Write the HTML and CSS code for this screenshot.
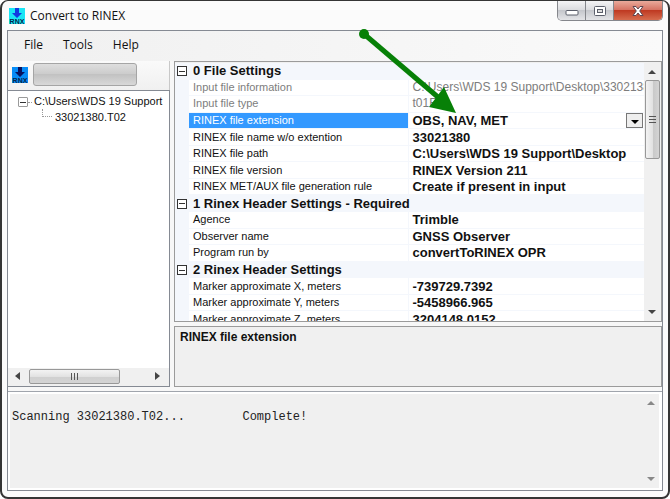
FILE: index.html
```html
<!DOCTYPE html>
<html lang="en">
<head>
    <meta charset="UTF-8">
    <meta name="viewport" content="width=device-width, initial-scale=1.0">
    <title>Convert to RINEX</title>
    <link rel="stylesheet" href="styles.css">
</head>
<body>

<div class="window">
    <header class="titlebar">
        <svg class="app-icon" viewBox="0 0 16 16">
            <rect width="16" height="16" fill="#19e5f5"/>
            <path d="M6 0h4v5h3l-5 5-5-5h3z" fill="#1238e0"/>
            <text x="8" y="16" class="icon-text">RNX</text>
        </svg>
        <h1>Convert to RINEX</h1>
        <div class="window-buttons">
            <button class="win-btn" aria-label="Minimize">
                <svg width="14" height="12" viewBox="0 0 14 12"><rect x="1" y="5.5" width="12" height="4.5" rx="1" fill="#fff" stroke="#5b5f6b"/></svg>
            </button>
            <button class="win-btn" aria-label="Maximize">
                <svg width="14" height="12" viewBox="0 0 14 12"><rect x="1.5" y="1.5" width="11" height="9" rx="1" fill="#fff" stroke="#5b5f6b"/><rect x="4.5" y="4.5" width="5" height="3" fill="#ddd" stroke="#5b5f6b"/></svg>
            </button>
            <button class="win-btn close" aria-label="Close">
                <svg width="14" height="12" viewBox="0 0 14 12"><path d="M2 1.5h3L7 4l2-2.500h3L8.700 6l3.300 4.500H9L7 8l-2 2.500H2L5.300 6z" fill="#fff" stroke="#5e4650"/></svg>
            </button>
        </div>
    </header>

    <div class="client">
        <nav class="menu">
            <button>File</button>
            <button>Tools</button>
            <button>Help</button>
        </nav>

        <main class="main">
            <section class="files">
                <div class="toolbar">
                    <button class="convert" aria-label="Convert">
                        <svg class="app-icon" viewBox="0 0 16 16">
                            <rect width="16" height="16" fill="#078cf7"/>
                            <path d="M6 0h4v5h3l-5 5-5-5h3z" fill="#07135f"/>
                            <text x="8" y="16" class="icon-text">RNX</text>
                        </svg>
                    </button>
                    <div class="progress" role="progressbar" aria-label="Progress"></div>
                </div>
                <div class="tree">
                    <ul>
                        <li>
                            <button class="toggle light" aria-label="Collapse folder"></button><span class="branch"></span>C:\Users\WDS 19 Support
                            <ul>
                                <li><span class="leaf"></span>33021380.T02</li>
                            </ul>
                        </li>
                    </ul>
                    <div class="scroll-x">
                        <svg width="8" height="8" viewBox="0 0 8 8"><path d="M6 0v8L1 4z" fill="#444"/></svg>
                        <div class="thumb"><i></i><i></i><i></i></div>
                        <svg width="8" height="8" viewBox="0 0 8 8"><path d="M2 0v8l5-4z" fill="#444"/></svg>
                    </div>
                </div>
            </section>

            <section class="props">
                <div class="grid">
                    <div class="rows">
                        <table>
                            <colgroup>
                                <col class="col-toggle">
                                <col>
                                <col class="col-value">
                            </colgroup>
                            <tr class="group"><td><button class="toggle" aria-label="Collapse"></button></td><th colspan="2">0 File Settings</th></tr>
                            <tr class="disabled"><td></td><td>Input file information</td><td>C:\Users\WDS 19 Support\Desktop\33021380</td></tr>
                            <tr class="disabled"><td></td><td>Input file type</td><td>t01F</td></tr>
                            <tr class="selected">
                                <td></td>
                                <td><label for="extension">RINEX file extension</label></td>
                                <td>
                                    <div class="dropdown">
                                        <select id="extension"><option>OBS, NAV, MET</option></select>
                                        <span class="arrow"></span>
                                    </div>
                                </td>
                            </tr>
                            <tr><td></td><td>RINEX file name w/o extention</td><td>33021380</td></tr>
                            <tr><td></td><td>RINEX file path</td><td>C:\Users\WDS 19 Support\Desktop</td></tr>
                            <tr><td></td><td>RINEX file version</td><td>RINEX Version 211</td></tr>
                            <tr><td></td><td>RINEX MET/AUX file generation rule</td><td>Create if present in input</td></tr>
                            <tr class="group"><td><button class="toggle" aria-label="Collapse"></button></td><th colspan="2">1 Rinex Header Settings - Required</th></tr>
                            <tr><td></td><td>Agence</td><td>Trimble</td></tr>
                            <tr><td></td><td>Observer name</td><td>GNSS Observer</td></tr>
                            <tr><td></td><td>Program run by</td><td>convertToRINEX OPR</td></tr>
                            <tr class="group"><td><button class="toggle" aria-label="Collapse"></button></td><th colspan="2">2 Rinex Header Settings</th></tr>
                            <tr><td></td><td>Marker approximate X, meters</td><td>-739729.7392</td></tr>
                            <tr><td></td><td>Marker approximate Y, meters</td><td>-5458966.965</td></tr>
                            <tr><td></td><td>Marker approximate Z, meters</td><td>3204148.0152</td></tr>
                        </table>
                    </div>
                    <div class="scroll-y">
                        <svg width="8" height="6" viewBox="0 0 8 6"><path d="M0 5h8L4 1z" fill="#444"/></svg>
                        <div class="thumb"><i></i><i></i><i></i></div>
                        <svg width="8" height="6" viewBox="0 0 8 6"><path d="M0 1h8L4 5z" fill="#444"/></svg>
                    </div>
                </div>
                <div class="help">RINEX file extension</div>
            </section>
        </main>

        <div class="console">
            <textarea readonly aria-label="Output">

Scanning 33021380.T02...        Complete!</textarea>
            <div class="scroll-y">
                <svg width="8" height="6" viewBox="0 0 8 6"><path d="M0 5h8L4 1z" fill="#888"/></svg>
                <svg width="8" height="6" viewBox="0 0 8 6"><path d="M0 1h8L4 5z" fill="#888"/></svg>
            </div>
        </div>
    </div>

    <!-- arrow pointing at the file extension -->
    <svg class="pointer" width="100" height="86" viewBox="0 0 100 86">
        <circle cx="7" cy="7" r="5" fill="#078007"/>
        <path d="M7 7L82 71" stroke="#078007" stroke-width="5"/>
        <path d="M99 86L72 80 87 60z" fill="#078007"/>
    </svg>
</div>

</body>
</html>
```
FILE: styles.css
```css
* {
    box-sizing: border-box;
}

body {
    margin: 0;
    background: #fff;
    font-family: 'Liberation Sans', Arial, sans-serif;
    font-size: 11px;
    color: #111;
}

button {
    padding: 0;
    border: none;
    background: none;
    color: inherit;
    font: inherit;
}

.window {
    position: relative;
    display: flex;
    flex-direction: column;
    height: 100vh;
    padding: 0 5px 6px;
    border: 2px solid #353535;
    border-top-width: 1px;
    border-radius: 8px;
    background: #fbfbfb;
}

/* title bar */
.titlebar {
    display: flex;
    flex: none;
    height: 29px;
    align-items: center;
    padding-left: 2px;
}

.app-icon {
    display: block;
    width: 16px;
    height: 16px;
}

.icon-text {
    font-size: 7px;
    font-weight: bold;
    text-anchor: middle;
    fill: #05264c;
}

h1 {
    flex: 1;
    margin: 0 0 0 5px;
    font-family: 'Open Sans', sans-serif;
    font-size: 12px;
    font-weight: normal;
}

.window-buttons {
    display: flex;
    align-self: flex-start;
    border: 1px solid #85878c;
    border-top: none;
    border-radius: 0 0 5px 5px;
    overflow: hidden;
}

.win-btn {
    display: flex;
    width: 28px;
    height: 19px;
    align-items: center;
    justify-content: center;
    border-right: 1px solid #85878c;
    background: linear-gradient(#f4f4f5, #d9dadd 50%, #c5c7cc 50%, #e3e4e7);
}

.close {
    width: 48px;
    border-right: none;
    background: linear-gradient(#e9aa9b, #d67565 45%, #bf3a22 50%, #d66c4e);
}

/* client area */
.client {
    display: flex;
    flex: 1;
    min-height: 0;
    flex-direction: column;
    border: 1px solid #858a93;
    background: #f7f7f7;
}

.menu {
    display: flex;
    flex: none;
    height: 30px;
    align-items: center;
    gap: 20px;
    padding: 0 16px 4px;
    background: linear-gradient(90deg, #f0f0f0, #fafafa);
    font-family: 'Open Sans', sans-serif;
    font-size: 12px;
}

.main {
    display: flex;
    flex: 1;
    min-height: 0;
    gap: 4px;
}

.files {
    display: flex;
    width: 162px;
    flex: none;
    flex-direction: column;
}

.toolbar {
    display: flex;
    height: 29px;
    align-items: center;
    gap: 5px;
    padding: 1px 4px 3px;
    border-right: 1px solid #c8c8c8;
    background: linear-gradient(#fafafa, #f0f0f0);
}

.progress {
    width: 104px;
    height: 23px;
    border: 1px solid #a5a5a5;
    border-radius: 3px;
    background: linear-gradient(#dedede, #cbcbcb 50%, #c2c2c2 50%, #d8d8d8);
}

.tree {
    display: flex;
    flex: 1;
    flex-direction: column;
    justify-content: space-between;
    border: 1px solid #858a93;
    border-left: none;
    background: #fff;
    overflow: hidden;
}

.tree ul {
    margin: 0;
    padding: 0;
    list-style: none;
    line-height: 16px;
    white-space: nowrap;
}

.tree > ul {
    padding: 2px 0 0 10px;
}

.toggle {
    display: inline-block;
    width: 10px;
    height: 10px;
    border: 1px solid #333;
    background: linear-gradient(#333, #333) center / 6px 1px no-repeat #fff;
    vertical-align: middle;
}

.light {
    border-color: #9a9a9a;
    border-radius: 1px;
}

.branch {
    display: inline-block;
    width: 4px;
    margin-right: 2px;
    border-top: 1px dotted #999;
    vertical-align: middle;
}

.leaf {
    display: inline-block;
    width: 10px;
    height: 8px;
    margin: 0 3px 0 24px;
    border-left: 1px dotted #999;
    border-bottom: 1px dotted #999;
    vertical-align: 4px;
}

/* scroll bars */
.scroll-x {
    display: flex;
    height: 18px;
    align-items: center;
    padding: 0 8px 2px 6px;
    background: #f0f0f0;
}

.scroll-x .thumb {
    width: 91px;
    height: 15px;
    margin: 0 auto 0 7px;
    background: linear-gradient(#f3f3f3, #e2e2e2 50%, #cfcfcf 50%, #d4d4d4);
}

.scroll-y {
    display: flex;
    width: 16px;
    flex: none;
    flex-direction: column;
    align-items: center;
    justify-content: space-between;
    padding: 6px 0;
    background: #f0f0f0;
}

.thumb {
    display: flex;
    align-items: center;
    justify-content: center;
    gap: 2px;
    border: 1px solid #989898;
    border-radius: 2px;
}

.thumb i {
    width: 1px;
    height: 7px;
    background: #555;
}

.scroll-y .thumb {
    width: 15px;
    height: 79px;
    margin: 5px 0 auto;
    flex-direction: column;
    background: linear-gradient(90deg, #f3f3f3, #e2e2e2 50%, #c8c8c8 50%, #d4d4d4);
}

.scroll-y .thumb i {
    width: 7px;
    height: 1px;
}

/* property grid */
.props {
    display: flex;
    flex: 1;
    min-width: 0;
    flex-direction: column;
    gap: 4px;
}

.grid {
    display: flex;
    flex: 1;
    min-height: 0;
    padding: 1px 1px 0 0;
    border: 1px solid #9b9b9b;
    background: #f0f0f0;
}

.rows {
    flex: 1;
    min-width: 0;
    overflow: hidden;
    background: #f4f7fc;
}

table {
    width: 100%;
    height: 265px;
    table-layout: fixed;
    border-collapse: collapse;
}

.col-toggle {
    width: 14px;
}

.col-value {
    width: 235px;
}

td, th {
    padding: 0 0 0 4px;
    border-bottom: 1px solid #f4f7fc;
    background: #fff;
    line-height: 15px;
    text-align: left;
    white-space: nowrap;
    overflow: hidden;
}

td:first-child {
    padding: 0 0 0 2px;
    background: #f4f7fc;
    line-height: 10px;
}

td:nth-child(2) {
    border-right: 1px solid #f4f7fc;
}

th {
    background: #f4f7fc;
    font-size: 13px;
}

td:nth-child(3) {
    padding-left: 3px;
    font-size: 13px;
    font-weight: bold;
}

tr.disabled td {
    color: #7d7d7d;
}

tr.disabled td:nth-child(3) {
    font-size: 12px;
    font-weight: normal;
}

tr.selected td:nth-child(2) {
    background: #3399ff;
    color: #fff;
}

.dropdown {
    position: relative;
    display: flex;
}

.dropdown select {
    width: 100%;
    height: 15px;
    padding: 0;
    border: none;
    appearance: none;
    background: #fff;
    color: inherit;
    font: inherit;
}

.arrow {
    position: absolute;
    top: 0;
    right: 1px;
    width: 17px;
    height: 15px;
    border: 1px solid #777;
    background: #eee;
    pointer-events: none;
}

.arrow::after {
    content: '';
    position: absolute;
    top: 6px;
    left: 4px;
    border: 4px solid transparent;
    border-top-color: #000;
    border-bottom: none;
}

.help {
    height: 61px;
    flex: none;
    padding: 3px 5px;
    border: 1px solid #9b9b9b;
    background: #f0f0f0;
    font-size: 12px;
    font-weight: bold;
}

/* output */
.console {
    display: flex;
    height: 99px;
    flex: none;
    margin-top: 4px;
    padding: 2px 3px 2px 2px;
    border-top: 1px solid #a0a5ad;
    background: #fff;
}

.console textarea {
    flex: 1;
    padding: 1px 2px;
    border: none;
    outline: none;
    resize: none;
    background: #f0f0f0;
    color: #222;
    font-family: 'Liberation Mono', monospace;
    font-size: 12px;
    line-height: 15px;
}

.pointer {
    position: absolute;
    top: 26px;
    left: 355px;
    pointer-events: none;
}
```
